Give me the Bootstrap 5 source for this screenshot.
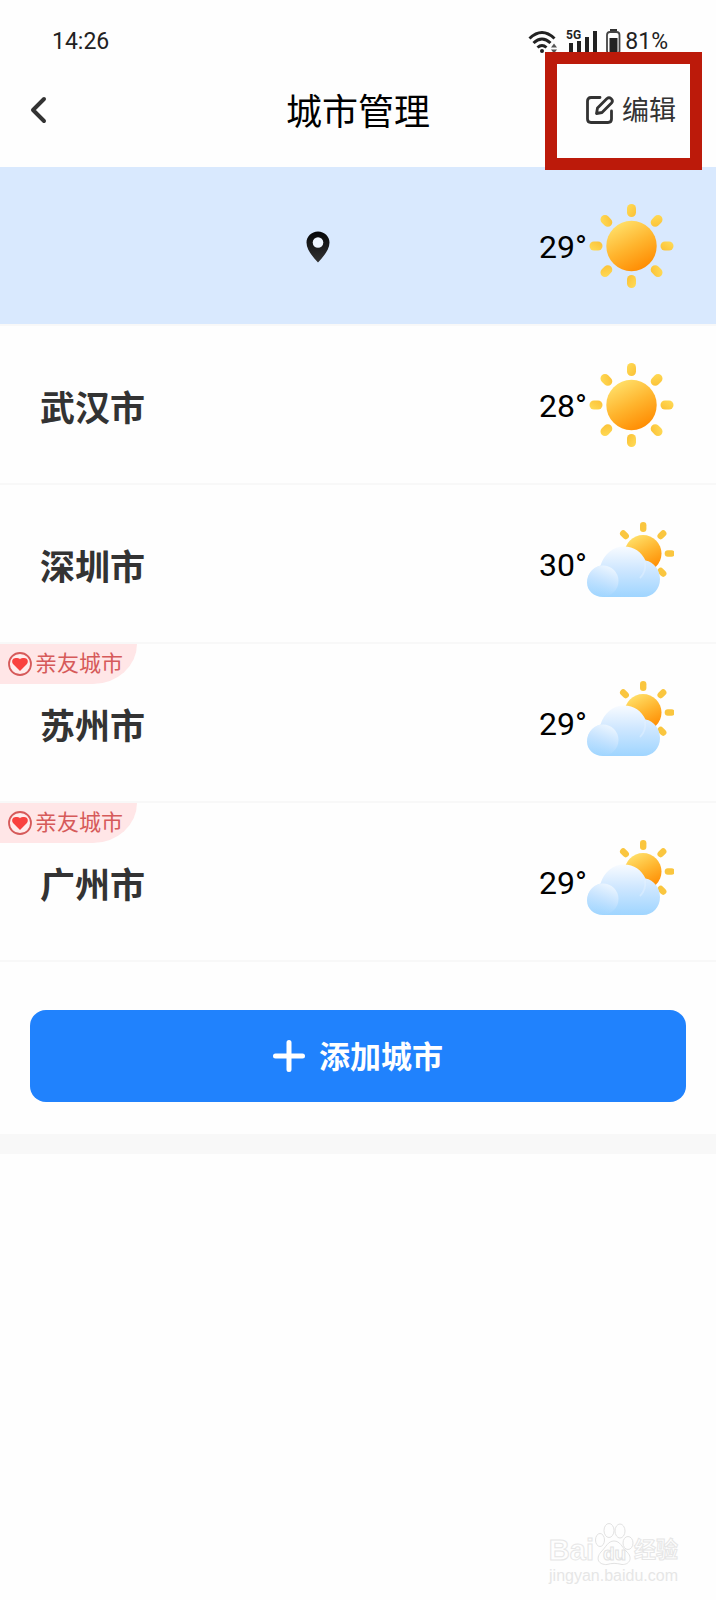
<!DOCTYPE html>
<html lang="zh-CN">
<head>
<meta charset="utf-8">
<meta name="viewport" content="width=device-width, initial-scale=1">
<title>城市管理</title>
<link rel="stylesheet" href="https://cdn.jsdelivr.net/npm/bootstrap@5.3.0/dist/css/bootstrap.min.css">
<style>
  body { font-family: Roboto, "Noto Sans CJK SC", sans-serif; color: #000; background: #fefefe; }
  svg { display: block; flex: none; }
  .status-bar { height: 60px; padding: 22px 48px 0 52px; font-size: 24px; line-height: 40px; color: #222; }
  .clock-text { font-size: 23px; }
  .status-icons { gap: 8px; }
  .title-bar { height: 107px; padding: 0 40px 8px 28px; display: grid; grid-template-columns: 1fr auto 1fr; }
  .title-bar h1 { font-size: 36px; line-height: 48px; font-weight: 400; padding: 6px 0 0 12px; }
  .back-link, .edit-btn { color: #333; }
  .edit-btn { font-size: 27px; line-height: 40px; gap: 8px; }
  .edit-btn span { padding-top: 2px; }
  .edit-wrap { position: relative; z-index: 2; }
  .highlight-box { position: absolute; inset: -37px -26px -39px -41px; border: 12px solid #bc1a0a; pointer-events: none; }
  .city-row { height: 159px; padding: 0 42px 0 40px; background: transparent; color: #000; }
  .list-group-flush > .city-row, .list-group-flush > .city-row:last-child { border: 0; border-bottom: 2px solid #f8f8f8; }
  .city-row.current { background: #d9e9fe; background-clip: padding-box; }
  .city-name { font-size: 35px; line-height: 48px; font-weight: 700; color: #333; padding-top: 10px; }
  .pin-slot { padding: 2px 0 0 56px; }
  .degrees { font-size: 32px; line-height: 40px; width: 47px; padding-top: 3px; }
  .friend-tag { position: absolute; left: 0; top: 0; height: 40px; width: 137px; padding-left: 8px; gap: 3px; font-size: 22px; line-height: 32px; color: #d65a5a; background: #ffe6e7; border-bottom-right-radius: 44px 40px; }
  .add-area { padding: 48px 30px 32px; }
  .add-btn, .add-btn:hover { height: 92px; border-radius: 16px; background: #2082fd; color: #fff; font-size: 31px; line-height: 40px; font-weight: 700; gap: 14px; }
  .add-btn span { padding-top: 4px; }
  .divider-band { height: 20px; background: #f8f8f8; }
  .watermark { padding: 0 38px 14px 0; font-family: "Liberation Sans", "Noto Sans CJK SC", sans-serif; }
  .wm-mark { font-size: 29px; line-height: 32px; font-weight: 700; color: #fefefe; -webkit-text-stroke: 1px #e6e6e6; }
  .wm-mark .wm-cn { font-size: 22px; }
  .wm-url { font-size: 16px; line-height: 20px; color: #e6e6e6; }
</style>
</head>
<body>
<svg width="0" height="0" class="position-absolute" aria-hidden="true">
  <defs>
    <linearGradient id="sunFill" x1=".2" y1=".05" x2=".7" y2="1"><stop offset="0" stop-color="#ffe06a"/><stop offset=".5" stop-color="#ffb52e"/><stop offset="1" stop-color="#ff8a00"/></linearGradient>
    <linearGradient id="rayFill" x1="0" y1="0" x2="1" y2="1"><stop offset="0" stop-color="#ffdc58"/><stop offset="1" stop-color="#fbc035"/></linearGradient>
    <linearGradient id="cloudFill" x1=".5" y1="0" x2=".5" y2="1"><stop offset="0" stop-color="#f8fbff"/><stop offset=".45" stop-color="#cfe7ff"/><stop offset="1" stop-color="#9fd5ff"/></linearGradient>
    <linearGradient id="puffFill" x1=".7" y1="0" x2=".3" y2="1"><stop offset="0" stop-color="#eff7ff"/><stop offset=".5" stop-color="#c8e4ff" stop-opacity=".8"/><stop offset="1" stop-color="#a6d8ff" stop-opacity="0"/></linearGradient>
    <linearGradient id="pinFill" x1="0" y1="0" x2="0" y2="1"><stop offset="0" stop-color="#050608"/><stop offset="1" stop-color="#333"/></linearGradient>
    <symbol id="sunny" viewBox="0 0 88 88">
      <g fill="url(#rayFill)">
        <rect id="ray" x="41" y="2" width="9" height="13" rx="4.5"/>
        <use href="#ray" transform="rotate(45 45.5 44)"/><use href="#ray" transform="rotate(90 45.5 44)"/><use href="#ray" transform="rotate(135 45.5 44)"/><use href="#ray" transform="rotate(180 45.5 44)"/><use href="#ray" transform="rotate(225 45.5 44)"/><use href="#ray" transform="rotate(270 45.5 44)"/><use href="#ray" transform="rotate(315 45.5 44)"/>
      </g>
      <circle cx="45.5" cy="44" r="25.2" fill="url(#sunFill)"/>
    </symbol>
    <symbol id="cloudy" viewBox="0 0 88 88">
      <g fill="#fac63f">
        <rect id="ray2" x="54" y="2" width="6.4" height="10" rx="3.2"/>
        <use href="#ray2" transform="rotate(45 57.2 33.5)"/><use href="#ray2" transform="rotate(90 57.2 33.5)"/><use href="#ray2" transform="rotate(135 57.2 33.5)"/><use href="#ray2" transform="rotate(315 57.2 33.5)"/>
      </g>
      <circle cx="57" cy="33.5" r="18.5" fill="url(#sunFill)"/>
      <path d="M17 77C7.500 77 1 70.500 1 62.500C1 54 7 48 14.500 45.500C18 34 27 26.500 38 26.500C48 26.500 55.500 32 59.500 40.500C68 42 74 50 74 59C74 69 67 77 57 77Z" fill="url(#cloudFill)"/>
      <circle cx="17" cy="61" r="15.5" fill="url(#puffFill)"/>
      <path d="M59 42C60 49 58 54 54 58" fill="none" stroke="#e4f2ff" stroke-width="2" opacity=".5"/>
    </symbol>
    <symbol id="heart" viewBox="0 0 24 24">
      <circle cx="12" cy="12" r="11" fill="#ffecec" stroke="#d65a5a" stroke-width="1.8"/>
      <path d="M12 19L5.300 12.300C3 9.500 4.500 6 7.800 6C9.700 6 11.200 6.200 12 7.200C12.800 6.200 14.300 6 16.200 6C19.500 6 21 9.500 18.700 12.300Z" fill="#f9423f"/>
    </symbol>
  </defs>
</svg>

<div class="d-flex flex-column min-vh-100">
  <div class="status-bar d-flex justify-content-between align-items-start">
    <span class="clock-text">14:26</span>
    <div class="status-icons d-flex align-items-center">
      <svg width="30" height="26" viewBox="0 0 30 26" fill="none" stroke="#222" stroke-width="3"><path d="M1.500 9.500Q14 -2.500 26.500 9.500M5.500 14Q14 6 22.500 14M9.500 18.500Q14 14.500 18.500 18.500"/><circle cx="14" cy="22" r="2" fill="#222" stroke="none"/><path d="M23 18.500L26 14.500L29 18.500ZM23 20.500H29L26 24.500Z" fill="#555" stroke="none"/></svg>
      <svg width="32" height="26" viewBox="0 0 32 26" fill="#222"><text x="0" y="10" font-size="12" font-weight="700" font-family="Roboto, sans-serif">5G</text><path d="M3 14h4v10H3zM11 12h4v12h-4zM19 8h4v16h-4zM27 2h4v22h-4z"/></svg>
      <div class="d-flex align-items-center gap-1">
        <svg width="15" height="26" viewBox="0 0 15 26"><path d="M4 1h7" stroke="#333" stroke-width="2"/><rect x="1" y="3" width="12.500" height="22" rx="3" fill="none" stroke="#444" stroke-width="1.8"/><rect x="3.5" y="9" width="8" height="14" fill="#222"/></svg>
        <span class="clock-text">81%</span>
      </div>
    </div>
  </div>

  <header class="title-bar align-items-center">
    <a href="#" class="back-link" aria-label="返回"><svg width="20" height="28" viewBox="0 0 20 28"><path d="M16 3L5 14L16 25" fill="none" stroke="currentColor" stroke-width="4" stroke-linecap="round" stroke-linejoin="round"/></svg></a>
    <h1 class="m-0">城市管理</h1>
    <div class="edit-wrap ms-auto">
      <button type="button" class="edit-btn btn p-0 border-0 d-flex align-items-center">
        <svg width="28" height="28" viewBox="0 0 28 28" fill="none" stroke="currentColor" stroke-width="2.8" stroke-linecap="round" stroke-linejoin="round"><path d="M14 1.500H5Q1.500 1.500 1.500 5V23Q1.500 26.500 5 26.500H22Q25.500 26.500 25.500 23V15"/><path d="M10.500 17.500L11.500 12L21 2.500Q23 .9 25 2.500Q27.500 4.800 25.500 7L16 16.500Z"/></svg>
        <span>编辑</span>
      </button>
      <div class="highlight-box"></div>
    </div>
  </header>

  <main>
    <ul class="list-group list-group-flush">
      <li class="list-group-item city-row current d-flex align-items-center">
        <div class="pin-slot flex-grow-1 d-flex justify-content-center"><svg width="24" height="32" viewBox="0 0 24 32" role="img" aria-label="当前位置"><path d="M12 .5C5.500 .5 .5 5.500 .5 11.500C.5 19 7 26 12 31.500C17 26 23.500 19 23.500 11.500C23.500 5.500 18.500 .5 12 .5Z" fill="url(#pinFill)"/><circle cx="12" cy="11.500" r="5.300" fill="#eef5ff"/></svg></div>
        <span class="degrees">29°</span><svg width="88" height="88"><use href="#sunny"/></svg>
      </li>
      <li class="list-group-item city-row d-flex align-items-center">
        <span class="city-name flex-grow-1">武汉市</span>
        <span class="degrees">28°</span><svg width="88" height="88"><use href="#sunny"/></svg>
      </li>
      <li class="list-group-item city-row d-flex align-items-center">
        <span class="city-name flex-grow-1">深圳市</span>
        <span class="degrees">30°</span><svg width="88" height="88"><use href="#cloudy"/></svg>
      </li>
      <li class="list-group-item city-row d-flex align-items-center">
        <span class="friend-tag d-flex align-items-center"><svg width="24" height="24"><use href="#heart"/></svg>亲友城市</span>
        <span class="city-name flex-grow-1">苏州市</span>
        <span class="degrees">29°</span><svg width="88" height="88"><use href="#cloudy"/></svg>
      </li>
      <li class="list-group-item city-row d-flex align-items-center">
        <span class="friend-tag d-flex align-items-center"><svg width="24" height="24"><use href="#heart"/></svg>亲友城市</span>
        <span class="city-name flex-grow-1">广州市</span>
        <span class="degrees">29°</span><svg width="88" height="88"><use href="#cloudy"/></svg>
      </li>
    </ul>
    <div class="add-area">
      <button type="button" class="add-btn btn border-0 w-100 d-flex align-items-center justify-content-center">
        <svg width="32" height="32" viewBox="0 0 32 32"><path d="M16 2.500V29.500M2.500 16H29.500" stroke="#fff" stroke-width="5" stroke-linecap="round"/></svg>
        <span>添加城市</span>
      </button>
    </div>
    <div class="divider-band"></div>
  </main>

  <footer class="watermark mt-auto d-flex flex-column align-items-end">
    <div class="wm-mark d-flex align-items-end">
      <span>Bai</span>
      <svg width="40" height="44" viewBox="0 0 40 44" fill="#fefefe" stroke="#e2e2e2" stroke-width="1"><ellipse cx="6" cy="18" rx="4.500" ry="6.500"/><ellipse cx="15" cy="8.500" rx="5" ry="7"/><ellipse cx="26" cy="9" rx="5" ry="7"/><ellipse cx="34" cy="21" rx="5" ry="6.500"/><path d="M20 19C26 19 28 25 32 29C40 36 35 43 28 42.500C22 41 18 41 13 42.500C5 43 1 37 7 30C12 25 14 19 20 19Z"/><text x="9" y="38" font-size="19" font-weight="700" font-family="Liberation Sans, sans-serif">du</text></svg>
      <span class="wm-cn">经验</span>
    </div>
    <div class="wm-url">jingyan.baidu.com</div>
  </footer>
</div>
<script src="https://cdn.jsdelivr.net/npm/bootstrap@5.3.0/dist/js/bootstrap.bundle.min.js"></script>
</body>
</html>
